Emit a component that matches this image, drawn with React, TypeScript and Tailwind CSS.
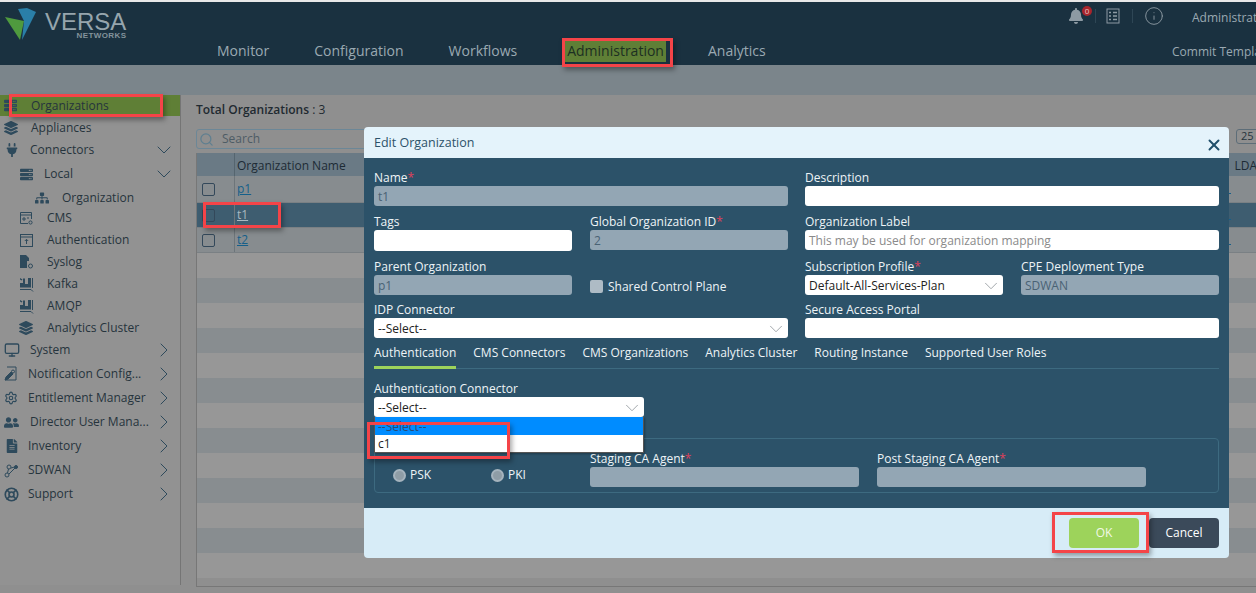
import { ChevronDown, ChevronRight, Search, X, Info, Settings, LifeBuoy, Monitor } from "lucide-react";
import { FaBell, FaLayerGroup, FaPlug, FaSitemap, FaUserFriends, FaFileAlt, FaServer } from "react-icons/fa";
import type { ReactNode } from "react";

const iconCls = "text-[#2e4a5c]";

function KafkaIcon() {
  return (
    <svg width="15" height="15" viewBox="0 0 15 15" className={iconCls}>
      <path d="M1 1l2.500 1.500-1 1L1 2.500zM4 1.500h2v5.500h3V1h3v9.500H1V6h3z" fill="currentColor" />
      <path d="M1 12.500h11l2 2" stroke="currentColor" fill="none" />
      <path d="M13.500 1v10" stroke="currentColor" />
    </svg>
  );
}

function BoxIcon({ kind }: { kind: "cms" | "auth" | "syslog" }) {
  if (kind === "syslog") {
    return (
      <svg width="15" height="15" viewBox="0 0 15 15" className={iconCls}>
        <path d="M1 0h6l3 3v3H8v7H1z" fill="currentColor" />
        <circle cx="11.500" cy="11" r="2" fill="none" stroke="currentColor" />
      </svg>
    );
  }
  if (kind === "auth") {
    return (
      <svg width="15" height="15" viewBox="0 0 15 15" fill="none" stroke="currentColor" className={iconCls}>
        <rect x="1.500" y="1.500" width="12" height="12" />
        <path d="M1.500 4h12M7.500 11V6.500M5.800 8l1.700-1.700L9.200 8" />
      </svg>
    );
  }
  return (
    <svg width="15" height="15" viewBox="0 0 15 15" fill="none" stroke="currentColor" className={iconCls}>
      <path d="M9 12.500H1.500v-11h11V8" />
      <path d="M1.500 4h11M4 7h2v2H4zM8 7h2" />
      <circle cx="11.500" cy="11.500" r="1.600" />
    </svg>
  );
}

function NoteIcon() {
  return (
    <svg width="15" height="16" viewBox="0 0 15 16" fill="none" stroke="currentColor" className={iconCls}>
      <path d="M3 1h9v13H1" />
      <path d="M1 14l1-3 5-5 2 2-5 5z" fill="currentColor" />
      <circle cx="9" cy="5.500" r="1.500" />
    </svg>
  );
}

function NodesIcon() {
  return (
    <svg width="15" height="15" viewBox="0 0 15 15" fill="none" stroke="currentColor" className={iconCls}>
      <circle cx="3" cy="12" r="2" />
      <circle cx="5" cy="4" r="2" />
      <circle cx="12" cy="4" r="1.500" fill="currentColor" />
      <path d="M4.500 6l-1 4M7 5l3.500 -1M5 11l6-6" />
    </svg>
  );
}

type NavItem = {
  label: string;
  icon: ReactNode;
  left: number;
  textX: number;
  arrow?: "down" | "right";
  h: number;
  mt?: number;
};

const navItems: NavItem[] = [
  { label: "Appliances", icon: <FaLayerGroup size={14} className={iconCls} />, left: 4, textX: 31, h: 22 },
  { label: "Connectors", icon: <FaPlug size={14} className={iconCls} />, left: 5, textX: 30, arrow: "down", h: 22 },
  { label: "Local", icon: <FaServer size={13} className={iconCls} />, left: 20, textX: 44, arrow: "down", h: 26 },
  { label: "Organization", icon: <FaSitemap size={14} className={iconCls} />, left: 35, textX: 62, h: 22 },
  { label: "CMS", icon: <BoxIcon kind="cms" />, left: 19, textX: 47, h: 22, mt: -2 },
  { label: "Authentication", icon: <BoxIcon kind="auth" />, left: 19, textX: 47, h: 22 },
  { label: "Syslog", icon: <BoxIcon kind="syslog" />, left: 19, textX: 47, h: 22 },
  { label: "Kafka", icon: <KafkaIcon />, left: 19, textX: 47, h: 22 },
  { label: "AMQP", icon: <KafkaIcon />, left: 19, textX: 47, h: 22 },
  { label: "Analytics Cluster", icon: <FaLayerGroup size={14} className={iconCls} />, left: 19, textX: 47, h: 22 },
  { label: "System", icon: <Monitor size={16} className={iconCls} />, left: 4, textX: 30, arrow: "right", h: 24, mt: -1 },
  { label: "Notification Config...", icon: <NoteIcon />, left: 4, textX: 28, arrow: "right", h: 24 },
  { label: "Entitlement Manager", icon: <Settings size={14} className={iconCls} />, left: 4, textX: 28, arrow: "right", h: 24 },
  { label: "Director User Mana...", icon: <FaUserFriends size={15} className={iconCls} />, left: 4, textX: 30, arrow: "right", h: 24 },
  { label: "Inventory", icon: <FaFileAlt size={14} className={iconCls} />, left: 5, textX: 28, arrow: "right", h: 24 },
  { label: "SDWAN", icon: <NodesIcon />, left: 4, textX: 28, arrow: "right", h: 24 },
  { label: "Support", icon: <LifeBuoy size={15} strokeWidth={2.6} className={iconCls} />, left: 4, textX: 28, arrow: "right", h: 24 },
];

const tabs = ["Authentication", "CMS Connectors", "CMS Organizations", "Analytics Cluster", "Routing Instance", "Supported User Roles"];

function Label({ text, required }: { text: string; required?: boolean }) {
  return (
    <div className="h-[18px] whitespace-nowrap text-[12px] leading-[20px] text-[#eef4f7]">
      {text}
      {required && <span className="text-[#e0405a]">*</span>}
    </div>
  );
}

function Field({ value, disabled, placeholder, select, h = 20 }: { value?: string; disabled?: boolean; placeholder?: string; select?: boolean; h?: number }) {
  return (
    <div
      style={{ height: h }}
      className={`flex items-center justify-between rounded-[3px] px-[4px] pt-[2px] text-[12px] ${disabled ? "bg-[#93a6b4] text-[#4a6274]" : "bg-white text-[#222]"}`}
    >
      <span className={placeholder ? "text-[#8a8a8a]" : ""}>{value ?? placeholder}</span>
      {select && <ChevronDown size={22} strokeWidth={1} className="-mr-[3px] shrink-0 text-[#9aa0a4]" />}
    </div>
  );
}

function Radio({ text, className }: { text: string; className: string }) {
  return (
    <div className={`flex items-center ${className}`}>
      <span className="h-[13px] w-[13px] rounded-full border-2 border-[#a5b3bd] bg-[#8f9da6]" />
      <span className="ml-[4px] text-[#eef4f7]">{text}</span>
    </div>
  );
}

function RedBox({ className }: { className: string }) {
  return <div className={`absolute border-[3px] border-[#f44448] shadow-[2px_3px_5px_rgba(0,0,0,0.35)] ${className}`} />;
}

export default function App() {
  return (
    <div className="relative flex h-[593px] w-[1256px] flex-col overflow-hidden bg-[#8f8f8f] font-['Open_Sans',sans-serif] text-[12px]">
      {/* top bar */}
      <div className="h-[2px] bg-[#e8e8e8]" />
      <header className="flex h-[63px] bg-[#1a3140] text-[#9aa9b2]">
        <div className="flex w-[217px] shrink-0 items-start pl-[5px] pt-[5px]">
          <svg width="31" height="34" viewBox="0 0 31 34" className="shrink-0">
            <path d="M0 10l15 23 4-19z" fill="#4f9a3e" />
            <path d="M17 33L31 5 22 1 13 2l6 12z" fill="#2a7fa8" />
          </svg>
          <div className="ml-[9px] mt-[4px] flex flex-col items-end">
            <span className="font-['Liberation_Sans',sans-serif] text-[24px] leading-[22px] text-[#96a5ad]">VERSA</span>
            <span className="font-['Liberation_Sans',sans-serif] text-[8px] font-bold leading-[6px] tracking-[0.4px] text-[#83939c]">NETWORKS</span>
          </div>
        </div>
        <nav className="flex gap-[45px] pt-[38px] text-[14px] leading-[22px]">
          <span>Monitor</span>
          <span>Configuration</span>
          <span>Workflows</span>
          <span className="-mr-[3px] ml-[3px] h-[22px] bg-[#5f7f36] px-[2px] text-[#1c2f22]">Administration</span>
          <span>Analytics</span>
        </nav>
        <div className="ml-auto flex w-[189px] shrink-0 flex-col pt-[3px]">
          <div className="flex h-[22px] items-center">
            <span className="relative ml-[1px] shrink-0">
              <FaBell size={16} className="text-[#8d9aa3]" />
              <span className="absolute -right-[8px] -top-[2px] flex h-[10px] w-[10px] items-center justify-center rounded-full bg-[#a8252c] text-[8px] leading-none text-[#e4c4c4]">0</span>
            </span>
            <div className="ml-[11px] h-[14px] w-px shrink-0 bg-[#2e4655]" />
            <svg width="14" height="16" viewBox="0 0 14 16" fill="none" stroke="#8d9aa3" className="ml-[10px] shrink-0">
              <rect x="1" y="1" width="12" height="14" />
              <path d="M3 4.500h2M7 4.500h4M3 8h2M7 8h4M3 11.500h2M7 11.500h4" strokeWidth="1.300" />
            </svg>
            <div className="ml-[12px] h-[14px] w-px shrink-0 bg-[#2e4655]" />
            <Info size={20} strokeWidth={1.1} className="ml-[11px] shrink-0 text-[#8d9aa3]" />
            <span className="ml-[28px] mt-[4px] whitespace-nowrap text-[12px]">Administrator</span>
          </div>
          <span className="mt-[16px] whitespace-nowrap pl-[105px] text-[12px]">Commit Template</span>
        </div>
      </header>
      <div className="h-[30px] shrink-0 bg-[#7b858b]" />

      <div className="flex min-h-0 flex-1">
        {/* sidebar */}
        <aside className="h-[490px] w-[181px] shrink-0 border-r border-[#757575] bg-[#929292] text-[#26343d]">
          <div className="flex h-[21px] items-center bg-[#5f7f36] pl-[4px]">
            <FaServer size={13} className={iconCls} />
            <span className="ml-[14px]">Organizations</span>
          </div>
          {navItems.map((item) => (
            <div key={item.label} style={{ height: item.h, paddingLeft: item.left, marginTop: item.mt ?? 0 }} className="flex items-center pr-[4px] pt-[2px]">
              <span style={{ width: item.textX - item.left }} className="flex shrink-0 justify-start">{item.icon}</span>
              <span className="whitespace-nowrap">{item.label}</span>
              {item.arrow === "down" && <ChevronDown size={24} strokeWidth={1} className="ml-auto shrink-0 text-[#2e4a5c]" />}
              {item.arrow === "right" && <ChevronRight size={24} strokeWidth={1} className="ml-auto shrink-0 text-[#2e4a5c]" />}
            </div>
          ))}
        </aside>

        {/* main */}
        <main className="flex min-w-0 flex-1 flex-col overflow-hidden pl-[15px]">
          <div className="flex h-[34px] shrink-0 items-end pb-[10px] text-[#1f2a31]">
            <b className="font-semibold">Total Organizations</b>&nbsp;: 3
          </div>
          <div className="flex h-[24px] shrink-0 items-start">
            <div className="flex h-[20px] w-[180px] items-center rounded-[3px] border border-[#6c8797] pl-[2px] text-[#4e5c65]">
              <Search size={15} className="shrink-0 text-[#5f7f90]" />
              <span className="ml-[8px]">Search</span>
            </div>
            <div className="-mr-[10px] ml-auto flex h-[15px] w-[30px] items-center rounded-[3px] border border-[#5d6d78] pl-[4px] text-[11px] text-[#26343d]">25</div>
          </div>
          <div className="h-[434px] shrink-0 overflow-hidden border-b border-l border-[#777]">
            <div className="flex h-[23px] items-center bg-[#6a7a85] pt-[2px] text-[#1d2b35]">
              <div className="-mt-[2px] h-[23px] w-[38px] border-r border-[#55656f]" />
              <span className="ml-[2px]">Organization Name</span>
              <span className="-mr-[1px] ml-auto whitespace-nowrap">LDA</span>
            </div>
            {["p1", "t1", "t2"].map((name) => (
              <div key={name} style={{ height: name === "p1" ? 27 : 25 }} className={`flex items-center border-b border-[#7a8084] ${name === "t1" ? "bg-[#3e5d70]" : "bg-[#878c8f]"}`}>
                <div className="flex h-full w-[38px] items-center border-r border-[#6d757a] pl-[5px]">
                  <span className="h-[13px] w-[13px] rounded-[2px] border border-[#33485a]" />
                </div>
                <span className={`ml-[2px] underline ${name === "t1" ? "text-[#aab8c0]" : "text-[#155f8a]"}`}>{name}</span>
                <span className="ml-auto mr-[25px] mt-[9px] h-px w-[3px] bg-[#155f8a]" />
              </div>
            ))}
            {[0, 1, 2, 3, 4, 5, 6, 7, 8, 9, 10, 11, 12].map((i) => (
              <div key={i} className={`h-[25px] ${i % 2 ? "bg-[#888d90]" : "bg-[#979797]"}`} />
            ))}
          </div>
        </main>
      </div>

      {/* modal */}
      <div className="absolute left-[364px] top-[127px] flex h-[431px] w-[865px] flex-col overflow-hidden rounded-[4px]">
        <div className="flex h-[31px] shrink-0 items-center justify-between bg-[#e4f3fb] pl-[10px] pr-[6px] pt-[2px] text-[12.5px] text-[#2c5269]">
          <span>Edit Organization</span>
          <X size={18} strokeWidth={2.6} className="mt-[2px] text-[#1f4f6b]" />
        </div>
        <div className="relative h-[350px] shrink-0 bg-[#2c5269] px-[10px] pt-[10px]">
          <div className="grid grid-cols-[414px_414px] gap-x-[17px] gap-y-[6px]">
            <div>
              <Label text="Name" required />
              <Field value="t1" disabled />
            </div>
            <div>
              <Label text="Description" />
              <Field />
            </div>

            <div className="grid grid-cols-[198px_198px] gap-x-[18px]">
              <div>
                <Label text="Tags" />
                <Field h={21} />
              </div>
              <div>
                <Label text="Global Organization ID" required />
                <Field value="2" disabled />
              </div>
            </div>
            <div>
              <Label text="Organization Label" />
              <Field placeholder="This may be used for organization mapping" />
            </div>

            <div className="grid grid-cols-[198px_198px] gap-x-[18px]">
              <div>
                <Label text="Parent Organization" />
                <Field value="p1" disabled />
              </div>
              <div className="mt-[18px] flex h-[20px] items-center pt-[3px]">
                <span className="h-[13px] w-[13px] rounded-[2px] bg-[#aebbc5]" />
                <span className="ml-[5px] text-[#eef4f7]">Shared Control Plane</span>
              </div>
            </div>
            <div className="grid grid-cols-[198px_198px] gap-x-[18px]">
              <div>
                <Label text="Subscription Profile" required />
                <Field value="Default-All-Services-Plan" select />
              </div>
              <div>
                <Label text="CPE Deployment Type" />
                <Field value="SDWAN" disabled />
              </div>
            </div>

            <div className="-mt-[1px]">
              <Label text="IDP Connector" />
              <Field value="--Select--" select />
            </div>
            <div className="-mt-[1px]">
              <Label text="Secure Access Portal" />
              <Field />
            </div>
          </div>

          {/* tabs */}
          <div className="flex h-[31px] items-start gap-[17px] border-b border-[#3d6a80] text-[#eef4f7]">
            {tabs.map((tab, i) => (
              <span key={tab} className={`flex h-[31px] items-center whitespace-nowrap pt-[2px] ${i === 0 ? "border-b-[3px] border-[#9dd35b]" : "pb-[3px]"}`}>
                {tab}
              </span>
            ))}
          </div>

          <div className="mt-[10px] w-[270px]">
            <Label text="Authentication Connector" />
            <Field value="--Select--" select />
          </div>

          <div className="mt-[21px] flex h-[55px] rounded-[4px] border border-[#3d6a80] pt-[10px]">
            <div className="flex w-[215px] shrink-0 pl-[18px] pt-[16px]">
              <Radio text="PSK" className="h-[20px] w-[98px]" />
              <Radio text="PKI" className="h-[20px]" />
            </div>
            <div className="w-[269px] shrink-0">
              <Label text="Staging CA Agent" required />
              <Field disabled />
            </div>
            <div className="ml-[18px] w-[269px] shrink-0">
              <Label text="Post Staging CA Agent" required />
              <Field disabled />
            </div>
          </div>

          {/* open select list */}
          <div className="absolute left-[10px] top-[259px] w-[270px] border border-t-0 border-[#555] bg-white text-[12px] shadow-[1px_1px_2px_rgba(0,0,0,0.3)]">
            <div className="flex h-[18px] items-center bg-[#008cff] pl-[3px] pt-[2px] text-[#2a4a72]">--Select--</div>
            <div className="flex h-[17px] items-center pl-[3px] text-[#222]">c1</div>
          </div>
        </div>
        <div className="flex flex-1 items-center justify-end gap-[10px] bg-[#d7ecf7] pr-[10px]">
          <button className="flex h-[30px] w-[70px] items-center justify-center rounded-[4px] bg-[#9dd35b] text-[#f2f9e6]">OK</button>
          <button className="flex h-[30px] w-[70px] items-center justify-center rounded-[4px] bg-[#3b4a5a] text-white">Cancel</button>
        </div>
      </div>

      <RedBox className="left-[562px] top-[38px] h-[29px] w-[111px]" />
      <RedBox className="left-[9px] top-[94px] h-[23px] w-[154px]" />
      <RedBox className="left-[203px] top-[202px] h-[26px] w-[78px]" />
      <RedBox className="left-[367px] top-[422px] h-[37px] w-[143px]" />
      <RedBox className="left-[1052px] top-[512px] h-[41px] w-[97px]" />
    </div>
  );
}
